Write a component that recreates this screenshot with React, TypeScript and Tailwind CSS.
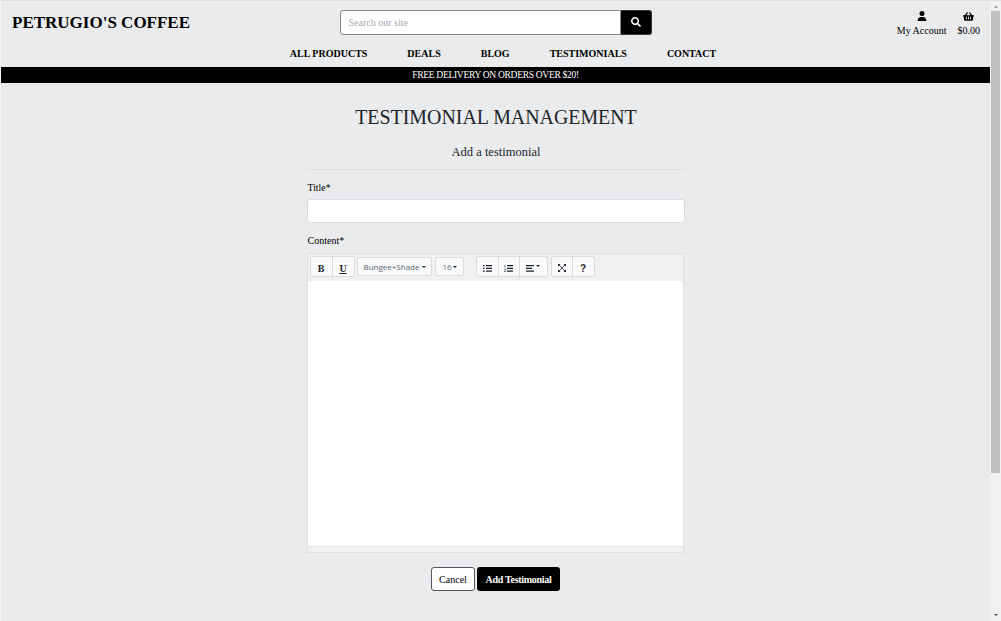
import type { ReactNode } from "react";
import { FaSearch, FaShoppingBasket } from "react-icons/fa";
import { FaUser } from "react-icons/fa6";

const navItems = ["ALL PRODUCTS", "DEALS", "BLOG", "TESTIMONIALS", "CONTACT"];

function Caret() {
  return (
    <svg viewBox="0 0 4 2" className="h-[2px] w-[4px] shrink-0" fill="#212529">
      <path d="M0 0h4L2 2z" />
    </svg>
  );
}

function ToolGroup({ children, className = "" }: { children: ReactNode; className?: string }) {
  return (
    <div
      className={`flex divide-x divide-[#dadde0] rounded-[2px] border border-[#dadde0] bg-[#f8f9fa] text-[#212529] ${className}`}
    >
      {children}
    </div>
  );
}

function Tool({ children, className }: { children: ReactNode; className: string }) {
  return <button className={`flex items-center justify-center ${className}`}>{children}</button>;
}

function Header() {
  return (
    <header className="flex h-[66px] shrink-0 flex-col">
      <div className="flex h-[42px] items-start justify-between">
        <a className="w-[338px] pt-[10px] pl-[11px] text-[17px] leading-[24px] font-bold">PETRUGIO'S COFFEE</a>
        <form className="mt-[9px] flex h-[25px] w-[312px]">
          <input
            className="min-w-0 flex-1 rounded-l-[3px] border border-[#85888b] bg-white px-[8px] text-[10px] outline-none placeholder:text-[#a3abb1]"
            placeholder="Search our site"
          />
          <button
            type="button"
            className="flex w-[31px] items-center justify-center rounded-r-[3px] border border-l-0 border-[#343638] bg-black text-white"
          >
            <FaSearch size={10} className="-mt-px" />
          </button>
        </form>
        <div className="flex w-[338px] justify-end gap-[11px] pt-[10px] pr-[10px] text-[10px] leading-[15px]">
          <a className="flex flex-col items-center">
            <FaUser className="h-[10px] w-[10px]" />
            <span className="mt-[2px]">My Account</span>
          </a>
          <a className="flex flex-col items-center">
            <FaShoppingBasket className="h-[11px] w-[11px]" />
            <span className="mt-px">$0.00</span>
          </a>
        </div>
      </div>
      <nav className="flex justify-center gap-[40px] pl-[15px] text-[10px] leading-[21px] font-bold whitespace-nowrap">
        {navItems.map((item) => (
          <a key={item}>{item}</a>
        ))}
      </nav>
    </header>
  );
}

function Editor() {
  return (
    <div className="flex h-[300px] w-[377px] flex-col border border-[#dfe0e1] bg-white">
      <div className="flex h-[27px] shrink-0 items-center bg-[#f1f1f1] pb-[2px] pl-[2px]">
        <ToolGroup className="h-[21px]">
          <Tool className="w-[22px] pt-[3px] text-[10px] font-bold">B</Tool>
          <Tool className="w-[21px] pt-[3px] text-[10px] font-bold underline">U</Tool>
        </ToolGroup>
        <ToolGroup className="ml-[2px] h-[19px]">
          <Tool className="w-[73px] gap-[2px] pl-px font-['Open_Sans',sans-serif] text-[8px] text-[#5a6570]">
            <span>Bungee+Shade</span>
            <Caret />
          </Tool>
        </ToolGroup>
        <ToolGroup className="ml-[3px] h-[19px]">
          <Tool className="w-[27px] gap-px pl-px font-['Open_Sans',sans-serif] text-[8px] text-[#6d7278]">
            <span>16</span>
            <Caret />
          </Tool>
        </ToolGroup>
        <ToolGroup className="ml-[12px] h-[21px]">
          <Tool className="w-[22px] pt-[3px]">
            <svg viewBox="0 0 9 7" className="h-[7px] w-[9px]" fill="currentColor">
              <path d="M0 0h1.5v1.3H0zM3 0h6v1.2H3zM0 2.8h1.5v1.3H0zM3 2.8h6V4H3zM0 5.6h1.5v1.3H0zM3 5.6h6v1.2H3z" />
            </svg>
          </Tool>
          <Tool className="w-[21px] pt-[3px]">
            <svg viewBox="0 0 9 7" className="h-[7px] w-[9px]">
              <path d="M3 .6h6M3 3.4h6M3 6.2h6" stroke="currentColor" strokeWidth="1.2" />
              <path d="M.3.5h.8v2M.2 4.2h1.5v.8L.3 6.5h1.5" stroke="currentColor" strokeWidth=".6" fill="none" />
            </svg>
          </Tool>
          <Tool className="w-[27px] gap-[2px] pt-[3px]">
            <svg viewBox="0 0 8 7" className="h-[7px] w-[8px]">
              <path d="M0 .6h8M0 3.4h6M0 6.2h8" stroke="currentColor" strokeWidth="1.2" />
            </svg>
            <span className="mb-[4px]">
              <Caret />
            </span>
          </Tool>
        </ToolGroup>
        <ToolGroup className="ml-[3px] h-[21px]">
          <Tool className="w-[21px] pt-[3px]">
            <svg viewBox="0 0 8 8" className="h-[8px] w-[8px]" fill="currentColor">
              <path d="M0 0h2.6L0 2.6zM8 0v2.6L5.4 0zM0 8V5.4L2.6 8zM8 8H5.4L8 5.4z" />
              <path d="M1 1l6 6M7 1L1 7" stroke="currentColor" strokeWidth=".8" />
            </svg>
          </Tool>
          <Tool className="w-[21px] pt-[3px] font-['Liberation_Sans',sans-serif] text-[10px] font-bold">?</Tool>
        </ToolGroup>
      </div>
      <div className="flex-1 bg-white" contentEditable suppressContentEditableWarning />
      <div className="h-[6px] border-t border-[#e4e5e6] bg-[#f1f1f1]" />
    </div>
  );
}

function Scrollbar() {
  return (
    <div className="flex w-[11px] shrink-0 flex-col items-center bg-[#f1f1f1]">
      <div className="flex h-[10px] items-center justify-center text-[#a3a3a3]">
        <svg viewBox="0 0 4 3" className="h-[3px] w-[4px]" fill="currentColor">
          <path d="M0 3h4L2 0z" />
        </svg>
      </div>
      <div className="h-[462px] w-[9px] bg-[#c1c1c1]" />
      <div className="mt-auto flex h-[13px] items-center justify-center text-[#505050]">
        <svg viewBox="0 0 4 2" className="h-[2px] w-[4px]" fill="currentColor">
          <path d="M0 0h4L2 2z" />
        </svg>
      </div>
    </div>
  );
}

export default function App() {
  return (
    <div className="flex h-[621px] w-[1001px] overflow-hidden border-t border-l border-t-[#dddfe0] border-l-[#f7f8f8] bg-[#e9ebec] font-['Liberation_Serif',serif] text-black">
      <div className="flex min-w-0 flex-1 flex-col">
        <Header />
        <div className="flex h-[16px] shrink-0 items-center justify-center bg-black text-[9.5px] leading-[16px] tracking-[-0.29px] text-white">
          FREE DELIVERY ON ORDERS OVER $20!
        </div>
        <main className="mx-auto flex w-[378px] flex-col">
          <h2 className="mt-[21px] pl-px text-center text-[19.9px] leading-[26px] text-[#212529]">
            TESTIMONIAL MANAGEMENT
          </h2>
          <h5 className="mt-[13px] pl-px text-center text-[12.5px] leading-[18px] text-[#212529]">Add a testimonial</h5>
          <hr className="mt-[8px] border-[#dbddde]" />
          <label className="mt-[11px] pl-px text-[9.8px] leading-[14px]">Title*</label>
          <input className="mt-[4px] h-[24px] rounded-[3px] border border-[#d9dde1] bg-white outline-none" />
          <label className="mt-[11px] mb-[5px] pl-px text-[10px] leading-[14px]">Content*</label>
          <Editor />
          <div className="mt-[14px] flex justify-center gap-[2px] text-[10px]">
            <button className="h-[24px] w-[44px] rounded-[3px] border border-[#54585c] bg-white pt-px">Cancel</button>
            <button className="h-[24px] w-[83px] rounded-[3px] bg-black pt-px font-bold tracking-[-0.3px] text-white">
              Add Testimonial
            </button>
          </div>
        </main>
      </div>
      <Scrollbar />
    </div>
  );
}
